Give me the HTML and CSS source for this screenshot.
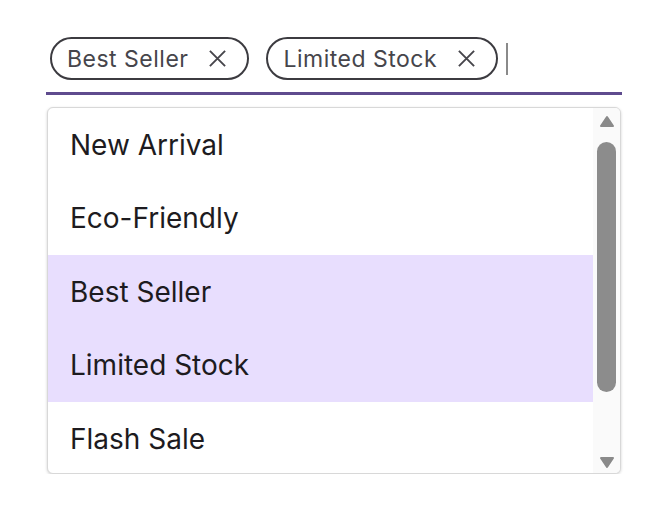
FILE: index.html
```html
<!DOCTYPE html>
<html lang="en">
<head>
<meta charset="utf-8">
<title>Tag select</title>
<link rel="stylesheet" href="styles.css">
</head>
<body>
<div class="field">
  <div class="chips">
    <span class="chip">Best Seller
      <svg class="chip-x" viewBox="0 0 20 20" width="19" height="19"><path d="M2 2 L18 18 M18 2 L2 18"/></svg>
    </span>
    <span class="chip">Limited Stock
      <svg class="chip-x" viewBox="0 0 20 20" width="19" height="19"><path d="M2 2 L18 18 M18 2 L2 18"/></svg>
    </span>
    <span class="caret"></span>
  </div>
  <div class="underline"></div>
  <div class="listbox">
    <ul class="options">
      <li class="option">New Arrival</li>
      <li class="option">Eco-Friendly</li>
      <li class="option selected">Best Seller</li>
      <li class="option selected">Limited Stock</li>
      <li class="option">Flash Sale</li>
    </ul>
    <div class="scrollbar">
      <svg class="arrow" viewBox="0 0 16 13" width="16" height="13"><polygon points="8,2 14,11 2,11"/></svg>
      <div class="thumb"></div>
      <svg class="arrow down" viewBox="0 0 16 13" width="16" height="13"><polygon points="2,2 14,2 8,11"/></svg>
    </div>
  </div>
</div>
</body>
</html>
```

FILE: styles.css
```css
html, body {
  margin: 0;
  padding: 0;
  background: #ffffff;
}
body {
  font-family: Inter, "Noto Sans", sans-serif;
}
.field {
  width: 576px;
  margin-left: 46px;
  padding-top: 37px;
}
.chips {
  display: flex;
  align-items: center;
  gap: 17px;
  padding-left: 4px;
  height: 43px;
}
.chip {
  display: inline-flex;
  align-items: center;
  box-sizing: border-box;
  height: 43px;
  border: 2px solid #3c3b40;
  border-radius: 22px;
  padding: 0 20px 0 15px;
  font-size: 23px;
  letter-spacing: 0.5px;
  color: #46454b;
  white-space: nowrap;
}
.chip-x {
  margin-left: 20px;
  fill: none;
  stroke: #46454b;
  stroke-width: 2;
}
.caret {
  width: 2px;
  height: 32px;
  background: #8a8a8a;
  margin-left: -9px;
}
.underline {
  height: 3px;
  margin-top: 12px;
  background: #5f4b8e;
}
.listbox {
  display: flex;
  box-sizing: border-box;
  margin: 12px 1px 0 1px;
  height: 367px;
  border: 1px solid #d8d8d8;
  border-radius: 6px;
  box-shadow: 0 1px 3px rgba(0, 0, 0, 0.18);
  overflow: hidden;
  background: #ffffff;
}
.options {
  flex: 1;
  list-style: none;
  margin: 0;
  padding: 0;
}
.option {
  display: flex;
  align-items: center;
  height: 73.5px;
  padding-left: 22px;
  font-size: 28px;
  color: #1d1b20;
}
.option.selected {
  background: #e8defe;
}
.scrollbar {
  width: 27px;
  display: flex;
  flex-direction: column;
  align-items: center;
  background: #fafafa;
}
.arrow {
  margin-top: 7px;
  fill: #8a8a8a;
  stroke: #8a8a8a;
  stroke-width: 2;
  stroke-linejoin: round;
}
.arrow.down {
  margin-top: auto;
  margin-bottom: 4px;
}
.thumb {
  width: 19px;
  height: 250px;
  margin-top: 14px;
  border-radius: 10px;
  background: #8c8c8c;
}
```
